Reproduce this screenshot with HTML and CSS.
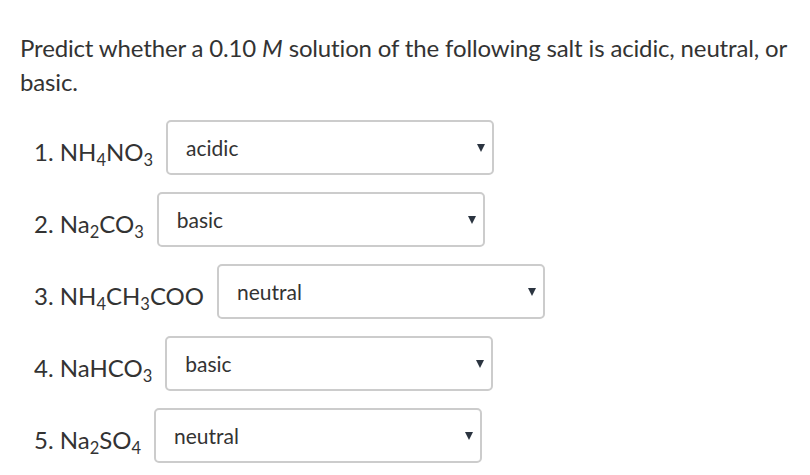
FILE: index.html
```html
<!DOCTYPE html>
<html>
<head>
<meta charset="utf-8">
<link rel="stylesheet" href="styles.css">
</head>
<body>
<div class="page">
  <p class="prompt"><span>Predict whether a 0.10</span> <i class="unit">M</i> <span>solution of the following salt is acidic, neutral, or</span> <span>basic.</span></p>
  <ol class="items">
    <li class="item"><span class="label">1. NH<sub>4</sub>NO<sub>3</sub></span><div class="select"><span class="value">acidic</span><span class="arrow"></span></div></li>
    <li class="item"><span class="label">2. Na<sub>2</sub>CO<sub>3</sub></span><div class="select"><span class="value">basic</span><span class="arrow"></span></div></li>
    <li class="item"><span class="label">3. NH<sub>4</sub>CH<sub>3</sub>COO</span><div class="select"><span class="value">neutral</span><span class="arrow"></span></div></li>
    <li class="item"><span class="label">4. NaHCO<sub>3</sub></span><div class="select"><span class="value">basic</span><span class="arrow"></span></div></li>
    <li class="item"><span class="label">5. Na<sub>2</sub>SO<sub>4</sub></span><div class="select"><span class="value">neutral</span><span class="arrow"></span></div></li>
  </ol>
</div>
</body>
</html>
```
FILE: styles.css
```css
html, body { margin: 0; padding: 0; background: #fff; }
body { font-family: Lato, "Liberation Sans", sans-serif; color: #333; }
.page { padding: 31px 20px 0 20px; }
.prompt { margin: 0; font-size: 24px; line-height: 34px; width: 780px; letter-spacing: -0.15px; }
.items { list-style: none; margin: 21px 0 0 0; padding: 0 0 0 14px; display: flex; flex-direction: column; gap: 17px; }
.item { display: flex; align-items: center; gap: 13px; height: 55px; }
.label { font-size: 24px; white-space: nowrap; padding-top: 7px; }
.label sub { font-size: 16.5px; vertical-align: -5px; line-height: 0; }
.select { box-sizing: border-box; width: 328px; height: 55px; border: 2px solid #ccc; border-radius: 5px; display: flex; align-items: center; justify-content: space-between; padding: 0 7px 0 18px; }
.value { font-size: 21px; color: #333; }
.arrow { width: 0; height: 0; border-left: 4.5px solid transparent; border-right: 4.5px solid transparent; border-top: 8px solid #2b3440; }
```
